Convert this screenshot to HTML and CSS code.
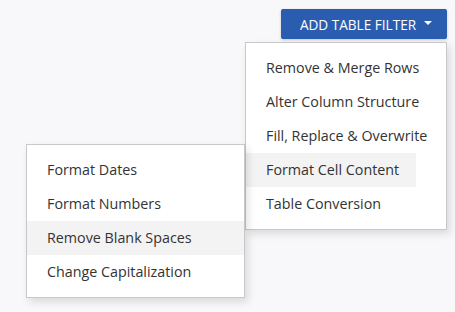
FILE: index.html
```html
<!DOCTYPE html>
<html lang="en">
<head>
    <meta charset="UTF-8">
    <title>Table Filters</title>
    <link rel="stylesheet" href="styles.css">
</head>
<body>
    <div class="toolbar">
        <button class="filter-btn">ADD TABLE FILTER <span class="caret"></span></button>
    </div>
    <div class="menus">
        <ul class="menu sub-menu">
            <li>Format Dates</li>
            <li>Format Numbers</li>
            <li class="active">Remove Blank Spaces</li>
            <li>Change Capitalization</li>
        </ul>
        <ul class="menu main-menu">
            <li>Remove &amp; Merge Rows</li>
            <li>Alter Column Structure</li>
            <li>Fill, Replace &amp; Overwrite</li>
            <li class="active open">Format Cell Content</li>
            <li>Table Conversion</li>
        </ul>
    </div>
</body>
</html>
```

FILE: styles.css
```css
body {
    margin: 0;
    background-color: #f8f8fa;
    font-family: "Open Sans", "Noto Sans", sans-serif;
    width: 455px;
    height: 312px;
    overflow: hidden;
}
.toolbar {
    display: flex;
    justify-content: flex-end;
    padding: 9px 8px 0 0;
}
.filter-btn {
    background-color: #2a5db0;
    color: #fff;
    border: none;
    border-radius: 2px;
    width: 166px;
    height: 30px;
    font-family: inherit;
    font-size: 13.6px;
    display: flex;
    align-items: center;
    justify-content: center;
    gap: 8px;
    padding: 0 0 0 4px;
    box-shadow: 0 1px 3px rgba(0, 0, 0, 0.2);
}
.caret {
    width: 0;
    height: 0;
    border-left: 4px solid transparent;
    border-right: 4px solid transparent;
    border-top: 4px solid #fff;
    margin-top: -2px;
}
.menus {
    position: relative;
}
.menu {
    list-style: none;
    margin: 0;
    padding: 8px 0;
    background: #fff;
    border: 1px solid #c8c8c8;
    box-shadow: 3px 4px 8px rgba(0, 0, 0, 0.12);
    position: absolute;
    font-size: 14.3px;
    color: #333;
}
.menu li {
    height: 34px;
    line-height: 34px;
    padding-left: 20px;
    white-space: nowrap;
}
.menu li.active {
    background-color: #f3f3f3;
}
.main-menu {
    left: 245px;
    top: 3px;
    width: 200px;
}
.main-menu li.open {
    margin-right: 30px;
}
.sub-menu {
    left: 26px;
    top: 105px;
    width: 217px;
    z-index: 2;
}
```
